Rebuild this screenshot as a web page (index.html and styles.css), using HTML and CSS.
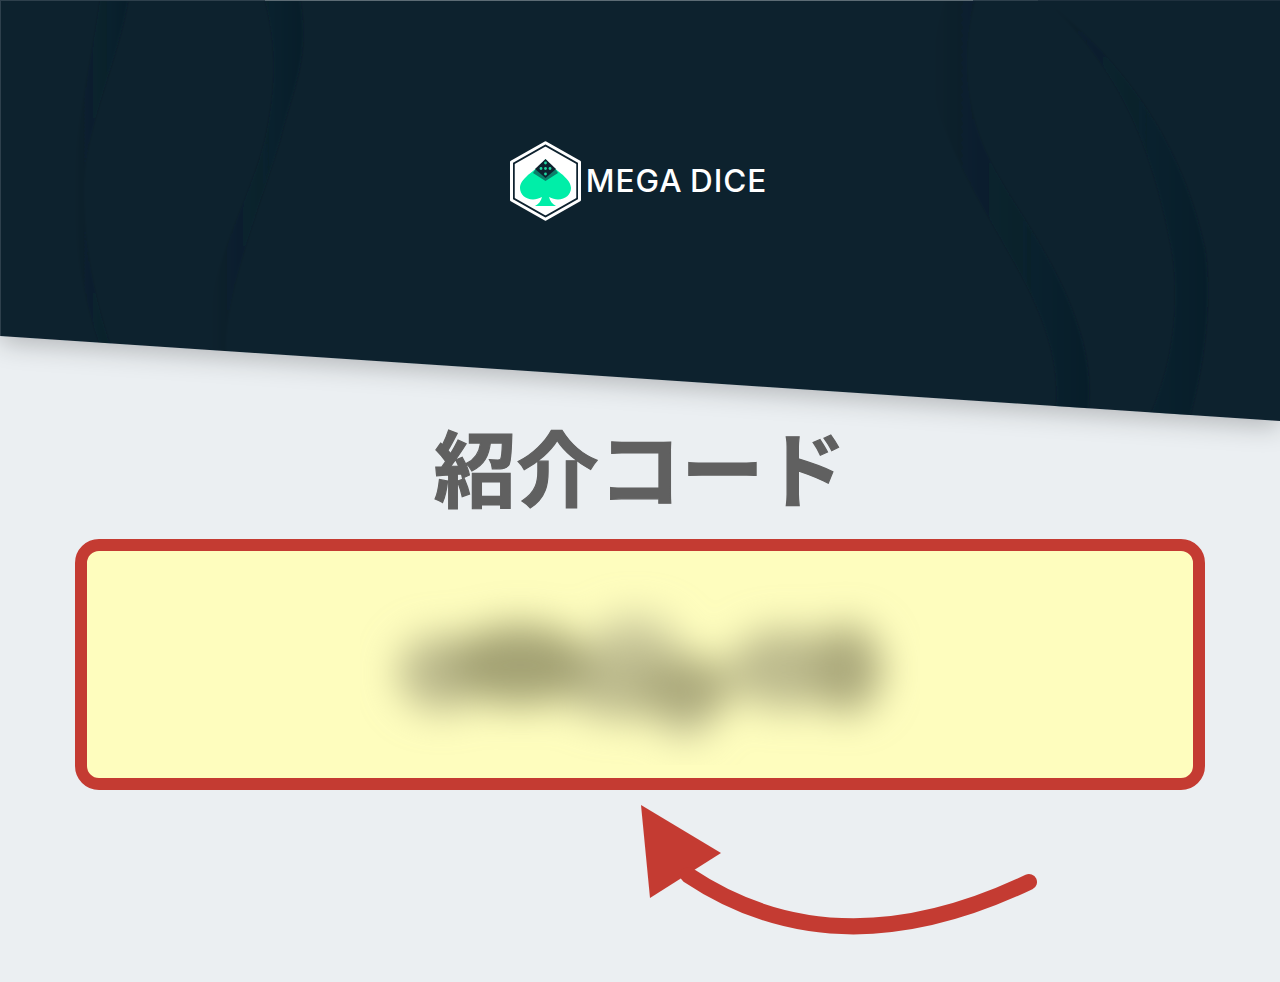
FILE: index.html
```html
<!DOCTYPE html>
<html lang="ja">
<head>
<meta charset="utf-8">
<title>紹介コード</title>
<link rel="stylesheet" href="styles.css">
</head>
<body>
<header class="hero">
  <svg class="hero-bg" viewBox="0 0 1280 470" width="1280" height="470" aria-hidden="true">
    <defs>
      <filter id="heroShadow" filterUnits="userSpaceOnUse" x="0" y="0" width="1280" height="470">
        <feDropShadow dx="0" dy="6" stdDeviation="13" flood-color="#000" flood-opacity="0.24"/>
      </filter>
      <filter id="waveSoft" filterUnits="userSpaceOnUse" x="0" y="0" width="1280" height="470">
        <feGaussianBlur stdDeviation="1.200"/>
      </filter>
      <clipPath id="heroClip"><polygon points="0,0 1280,0 1280,421 0,336"/></clipPath>
      <linearGradient id="topLine" x1="0" x2="1" y1="0" y2="0">
        <stop offset="0.207" stop-color="#2e404c"/>
        <stop offset="0.207" stop-color="#5d6c75"/>
        <stop offset="0.76" stop-color="#5d6c75"/>
        <stop offset="0.76" stop-color="#2e404c"/>
        <stop offset="0.811" stop-color="#2e404c"/>
        <stop offset="0.811" stop-color="#1f313e"/>
      </linearGradient>
      <linearGradient id="waveLR" x1="0" x2="1" y1="0" y2="0">
        <stop offset="0" stop-color="#0b1d29" stop-opacity="0"/>
        <stop offset="1" stop-color="#0b1d29" stop-opacity="0.45"/>
      </linearGradient>
    </defs>
    <polygon class="hero-shape" points="0,0 1280,0 1280,421 0,336" filter="url(#heroShadow)"/>
    <g clip-path="url(#heroClip)" filter="url(#waveSoft)">
      <path class="wave" d="M100 0C92 60 74 130 74 190C74 250 84 300 100 345L110 345C92 290 84 240 84 190C84 130 118 60 128 0Z"/>
      <path class="wave" d="M265 0C278 50 276 90 265 140C250 200 212 260 210 320L210 355L226 355C222 300 262 200 280 140C292 90 310 60 300 0Z"/>
      <path class="wave" d="M975 0C962 50 964 100 985 150C1010 205 1060 260 1082 340C1090 370 1090 395 1088 410L1056 410C1060 370 1050 330 1024 280C992 220 950 160 932 90C928 50 940 20 945 0Z"/>
      <path class="wave" d="M1045 0C1110 50 1180 130 1205 250C1212 300 1205 360 1190 416L1150 416C1175 360 1180 300 1172 250C1150 130 1110 60 1045 0Z"/>
    </g>
    <rect x="0" y="0" width="1280" height="1" fill="url(#topLine)"/>
    <rect class="edge" x="0" y="0" width="1" height="336"/>
  </svg>
  <div class="brand">
    <svg class="brand-mark" viewBox="0 0 72 80" width="72" height="80" aria-hidden="true">
      <polygon class="hex-outer" points="35.500,1.800 69.500,21 69.500,59 35.500,78.200 1.500,59 1.500,21"/>
      <polygon class="hex-inner" points="35.500,6.500 65.500,23.500 65.500,56.500 35.500,73.500 5.500,56.500 5.500,23.500"/>
      <path class="spade" d="M35.500 18C42 28 61 36 61 47C61 56 50 62 39 56C40 60 42 63 46 65L25 65C29 63 31 60 32 56C21 62 10 56 10 47C10 36 29 28 35.500 18Z"/>
      <polygon class="die-side" points="25,29 35.500,22 46,29 48,32 35.500,40 23,32"/>
      <polygon class="die" points="35.500,18 46,28 35.500,37 25,28"/>
      <g class="pips">
        <circle cx="35.500" cy="22" r="1.400"/><circle cx="31" cy="27.500" r="1.400"/><circle cx="35.500" cy="27.500" r="1.400"/><circle cx="40" cy="27.500" r="1.400"/><circle cx="35.500" cy="33" r="1.400"/>
      </g>
    </svg>
    <span class="brand-name">MEGA DICE</span>
  </div>
</header>

<main class="content">
  <h1 class="title">紹介コード</h1>
  <div class="code-box">
    <svg class="code-blur" viewBox="0 -20 560 200" width="560" height="200" aria-hidden="true">
      <defs>
        <filter id="smear" filterUnits="userSpaceOnUse" x="0" y="-20" width="560" height="200"><feGaussianBlur stdDeviation="19"/></filter>
      </defs>
      <g filter="url(#smear)">
        <ellipse class="blob-light" cx="82" cy="88" rx="44" ry="38"/>
        <ellipse class="blob-faint" cx="275" cy="62" rx="44" ry="32"/>
        <ellipse class="blob-light" cx="264" cy="96" rx="66" ry="38"/>
        <ellipse class="blob-light" cx="425" cy="84" rx="56" ry="40"/>
        <ellipse class="blob-faint" cx="325" cy="128" rx="26" ry="26"/>
        <ellipse class="blob-dark" cx="160" cy="80" rx="72" ry="40"/>
        <ellipse class="blob-mid" cx="325" cy="104" rx="46" ry="34"/>
        <ellipse class="blob-mid" cx="486" cy="84" rx="36" ry="44"/>
      </g>
    </svg>
  </div>
  <svg class="arrow" viewBox="0 0 400 140" width="400" height="140" aria-hidden="true">
    <polygon class="arrow-head" points="1,5 81,53 10,98"/>
    <path class="arrow-shaft" d="M389 82Q196 174 48 75"/>
  </svg>
</main>
</body>
</html>
```
FILE: styles.css
```css
html, body {
  margin: 0;
  padding: 0;
}
body {
  width: 1280px;
  height: 982px;
  overflow: hidden;
  background: #ebeff2;
  font-family: "Noto Sans CJK JP", "Noto Sans", sans-serif;
}
.hero {
  position: relative;
  height: 421px;
  display: flex;
  justify-content: center;
  align-items: flex-start;
  padding-top: 141px;
  box-sizing: border-box;
}
.hero-bg {
  position: absolute;
  top: 0;
  left: 0;
  display: block;
}
.hero-shape { fill: #0e222f; }
.wave { fill: url(#waveLR); }
.edge { fill: #2e404c; }
.brand {
  position: relative;
  display: flex;
  align-items: center;
  gap: 4px;
  margin-left: -3px;
}
.brand-mark { display: block; }
.hex-outer { fill: #0e222f; stroke: #fff; stroke-width: 3; stroke-linejoin: round; }
.hex-inner { fill: #fff; stroke: #fff; stroke-width: 1.500; stroke-linejoin: round; }
.spade { fill: #00eea8; }
.die { fill: #0e222f; }
.die-side { fill: #0b7f6a; }
.pips circle { fill: #1fd6a0; }
.brand-name {
  font-family: "Inter", "Liberation Sans", sans-serif;
  font-size: 31.500px;
  font-weight: 500;
  line-height: 38px;
  letter-spacing: 1px;
  word-spacing: -2px;
  color: #fff;
  white-space: nowrap;
}
.content {
  display: flex;
  flex-direction: column;
  align-items: center;
}
.title {
  margin: 0 0 30px;
  font-size: 82.500px;
  font-weight: 700;
  line-height: 88px;
  color: #606060;
  -webkit-text-stroke: 1.200px #606060;
}
.code-box {
  box-sizing: border-box;
  width: 1130px;
  height: 251px;
  border: 12px solid #c43b32;
  border-radius: 24px;
  background: #fefdbe;
  display: flex;
  justify-content: center;
  align-items: center;
}
.code-blur { display: block; }
.blob-dark { fill: #a3a173; }
.blob-mid { fill: #aba97b; }
.blob-light { fill: #bdbb8e; }
.blob-faint { fill: #d2d0a2; }
.arrow {
  display: block;
  margin-top: 10px;
  margin-left: 400px;
}
.arrow-head { fill: #c43b32; }
.arrow-shaft {
  fill: none;
  stroke: #c43b32;
  stroke-width: 16;
  stroke-linecap: round;
}
```
